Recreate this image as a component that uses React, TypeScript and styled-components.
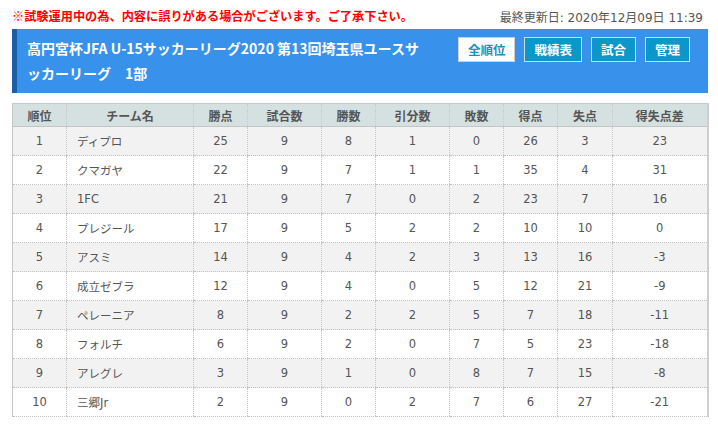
import React from "react";
import styled, { createGlobalStyle } from "styled-components";

const Global = createGlobalStyle`
  body {
    margin: 0;
    background: #fff;
    font-family: "DejaVu Sans", "Noto Sans CJK JP", sans-serif;
  }
`;

const JP = `"Noto Sans CJK JP", sans-serif`;

const Page = styled.div`
  padding: 6px 10px 0 12px;
  width: 696px;
`;

const TopBar = styled.div`
  display: flex;
  justify-content: space-between;
  align-items: center;
  height: 20px;
  margin-bottom: 3px;
`;

const Notice = styled.div`
  color: #f00;
  font-family: ${JP};
  font-weight: 700;
  font-size: 12.2px;
`;

const Updated = styled.div`
  color: #555;
  font-family: "DejaVu Sans", "Noto Sans CJK JP", sans-serif;
  font-size: 12px;
  padding-right: 5px;
`;

const Band = styled.div`
  display: flex;
  align-items: flex-start;
  background: #3891eb;
  border-left: 5px solid #1b5ea6;
  padding: 7px 18px 7px 10px;
  gap: 28px;
`;

const Title = styled.h1`
  flex: 1;
  margin: 0;
  color: #fff;
  font-family: ${JP};
  font-weight: 700;
  font-size: 14px;
  line-height: 25px;
  line-break: loose;
`;

const Buttons = styled.div`
  display: flex;
  gap: 9px;
  margin-top: 1px;
`;

const Btn = styled.div<{ $active?: boolean }>`
  box-sizing: border-box;
  height: 25px;
  padding: 0 9px;
  display: flex;
  align-items: center;
  font-family: ${JP};
  font-weight: 700;
  font-size: 12.5px;
  border: 1px solid ${(p) => (p.$active ? "#d0d0d0" : "#c9dde8")};
  background: ${(p) => (p.$active ? "#fff" : "#0a97c9")};
  color: ${(p) => (p.$active ? "#1a8fc4" : "#fff")};
`;

const Table = styled.table`
  margin-top: 10px;
  border-collapse: collapse;
  width: 695px;
  table-layout: fixed;
  border-top: 1px solid #c8c8c8;
  border-left: 1px solid #c8c8c8;
  border-right: 2px solid #cfcfcf;
`;

const Th = styled.th`
  background: #d5e0e0;
  color: #555;
  font-family: ${JP};
  font-weight: 700;
  font-size: 12px;
  height: 22px;
  padding: 0;
  border-left: 1px dotted #c8c8c8;
  border-bottom: 1px solid #c4c4c4;
`;

const Tr = styled.tr<{ $odd: boolean }>`
  background: ${(p) => (p.$odd ? "#f2f2f2" : "#fff")};
`;

const Td = styled.td<{ $left?: boolean }>`
  height: 28px;
  padding: 0 ${(p) => (p.$left ? "10px" : "0")};
  text-align: ${(p) => (p.$left ? "left" : "center")};
  color: #555;
  font-size: 11.5px;
  border-left: 1px dotted #c8c8c8;
  border-bottom: 1px dotted #c0c0c0;
  font-family: ${(p) => (p.$left ? `"DejaVu Sans", "Noto Sans CJK JP", sans-serif` : `"DejaVu Sans", sans-serif`)};
`;

const cols = [54, 127, 54, 74, 54, 74, 54, 54, 55, 95];
const heads = ["順位", "チーム名", "勝点", "試合数", "勝数", "引分数", "敗数", "得点", "失点", "得失点差"];

const rows: (string | number)[][] = [
  [1, "ディプロ", 25, 9, 8, 1, 0, 26, 3, 23],
  [2, "クマガヤ", 22, 9, 7, 1, 1, 35, 4, 31],
  [3, "1FC", 21, 9, 7, 0, 2, 23, 7, 16],
  [4, "プレジール", 17, 9, 5, 2, 2, 10, 10, 0],
  [5, "アスミ", 14, 9, 4, 2, 3, 13, 16, -3],
  [6, "成立ゼブラ", 12, 9, 4, 0, 5, 12, 21, -9],
  [7, "ペレーニア", 8, 9, 2, 2, 5, 7, 18, -11],
  [8, "フォルチ", 6, 9, 2, 0, 7, 5, 23, -18],
  [9, "アレグレ", 3, 9, 1, 0, 8, 7, 15, -8],
  [10, "三郷Jr", 2, 9, 0, 2, 7, 6, 27, -21],
];

export default function App() {
  return (
    <Page>
      <Global />
      <TopBar>
        <Notice>※試験運用中の為、内容に誤りがある場合がございます。ご了承下さい。</Notice>
        <Updated>最終更新日: 2020年12月09日 11:39</Updated>
      </TopBar>
      <Band>
        <Title lang="ja">高円宮杯JFA U-15サッカーリーグ2020 第13回埼玉県ユースサッカーリーグ　1部</Title>
        <Buttons>
          <Btn $active>全順位</Btn>
          <Btn>戦績表</Btn>
          <Btn>試合</Btn>
          <Btn>管理</Btn>
        </Buttons>
      </Band>
      <Table>
        <colgroup>
          {cols.map((w, i) => (
            <col key={i} style={{ width: w }} />
          ))}
        </colgroup>
        <thead>
          <tr>
            {heads.map((h) => (
              <Th key={h}>{h}</Th>
            ))}
          </tr>
        </thead>
        <tbody>
          {rows.map((r, i) => (
            <Tr key={i} $odd={i % 2 === 0}>
              {r.map((c, j) => (
                <Td key={j} $left={j === 1}>
                  {c}
                </Td>
              ))}
            </Tr>
          ))}
        </tbody>
      </Table>
    </Page>
  );
}
